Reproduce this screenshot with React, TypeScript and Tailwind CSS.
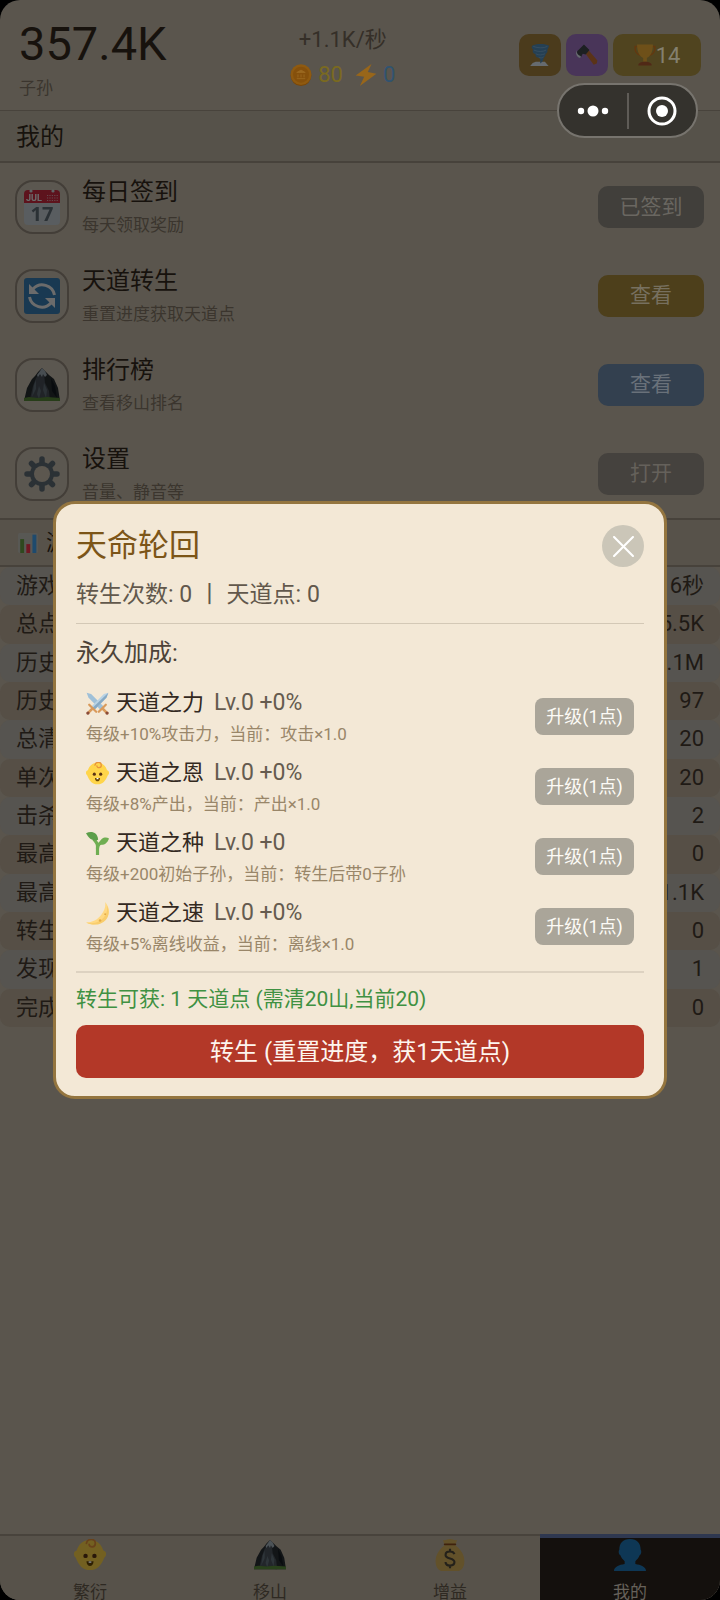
import React from "react";

interface IconProps {
  className?: string;
}

const CalendarIcon: React.FC<IconProps> = ({ className }) => (
  <svg viewBox="0 0 36 36" className={className}>
    <rect x="0" y="2" width="36" height="34" rx="4" fill="#d3dde4" />
    <path d="M0 14V5a4 4 0 0 1 4-4h28a4 4 0 0 1 4 4v9z" fill="#dd2e44" />
    <circle cx="7" cy="2" r="1.6" fill="#e8eef2" />
    <circle cx="29" cy="2" r="1.6" fill="#e8eef2" />
    <text x="2" y="12" fontSize="9" fontWeight="700" fontFamily="Roboto, sans-serif" fill="#fff">
      JUL
    </text>
    <path d="M23 6.500h11M23 9h11M23 11.500h11" stroke="#f4abba" strokeWidth="1.200" strokeDasharray="1.200 1.200" />
    <text x="18" y="32" fontSize="20" fontWeight="700" textAnchor="middle" fontFamily="Open Sans, sans-serif" fill="#66757f">
      17
    </text>
  </svg>
);

const RefreshIcon: React.FC<IconProps> = ({ className }) => (
  <svg viewBox="0 0 36 36" className={className}>
    <rect width="36" height="36" rx="3" fill="#3b88c3" />
    <g fill="none" stroke="#fff" strokeWidth="3">
      <path d="M9 11a12.500 12.500 0 0 1 21.500 6" />
      <path d="M27 25A12.500 12.500 0 0 1 5.500 19" />
    </g>
    <path d="M5 6v10h10z" fill="#fff" />
    <path d="M31 30V20H21z" fill="#fff" />
  </svg>
);

const MountainIcon: React.FC<IconProps> = ({ className }) => (
  <svg viewBox="0 0 36 36" className={className}>
    <path d="M0 34l3-13 5-9 3-3 3-4 4-4 3 3 4 4 5 4 4 9 2 13z" fill="#292f33" />
    <path d="M6 32l3-13 3-8 4-6 2-2 2 4 1 9 4 8 1 10z" fill="#4b545d" />
    <path d="M13 8l3-4 2-3 3 3 2 4-2 2-2-3-1 3-2-3-2 3z" fill="#aab8c2" />
    <path d="M10 18l2-5v9l-4 8zM20 16l3 7-1 8-3-8zM15 19l2 5-2 8-2-5z" fill="#66757f" />
    <path d="M27 11l4 8 2 12-5-7z" fill="#141b21" />
    <path d="M0 34v-3l5-1 9 1 9-1 13 1v3z" fill="#5c913b" />
  </svg>
);

const GearIcon: React.FC<IconProps> = ({ className }) => (
  <svg viewBox="0 0 36 36" className={className}>
    <g stroke="#66757f" strokeWidth="5.500" strokeLinecap="round">
      <path d="M18 3v30M3 18h30M7.500 7.500l21 21M28.500 7.500l-21 21" />
    </g>
    <circle cx="18" cy="18" r="12" fill="#66757f" />
    <circle cx="18" cy="18" r="8" fill="#dccfbc" />
  </svg>
);

const ChartIcon: React.FC<IconProps> = ({ className }) => (
  <svg viewBox="0 0 36 36" className={className}>
    <rect width="36" height="36" rx="3" fill="#b0afa9" />
    <rect x="4" y="11" width="7" height="25" fill="#5c913b" />
    <rect x="15" y="20" width="7" height="16" fill="#dd2e44" />
    <rect x="26" y="3" width="7" height="33" fill="#3b94d9" />
  </svg>
);

const CoinIcon: React.FC<IconProps> = ({ className }) => (
  <svg viewBox="0 0 36 36" className={className}>
    <circle cx="18" cy="19" r="17" fill="#7a4607" />
    <circle cx="18" cy="17.500" r="17" fill="#8f5a10" />
    <circle cx="18" cy="17.500" r="13" fill="#85500c" />
    <path d="M11 14l7-4 7 4H11zM11 24h14M13 17v5M18 17v5M23 17v5" fill="#9a6820" stroke="#9a6820" strokeWidth="1.500" />
  </svg>
);

const BoltIcon: React.FC<IconProps> = ({ className }) => (
  <svg viewBox="0 0 36 36" className={className}>
    <path d="M27 0L1 19l14 2-7 15 27-20-14-3z" fill="#98661a" />
  </svg>
);

const TornadoIcon: React.FC<IconProps> = ({ className }) => (
  <svg viewBox="0 0 36 36" className={className}>
    <path d="M6 31l5-2h15l6 7H2z" fill="#ccd6dd" />
    <path d="M5 3c6-4 22-4 28 0-1 3-2 5-3 7 1 3-1 5-3 7 0 3-2 4-3 6-1 4-2 7-6 9 1-4 1-6-1-9-6-1-7-4-6-6-5-2-6-5-4-8-3-2-3-4-2-6z" fill="#4a7fa8" />
    <path d="M7 4c8 3 17 3 23 0M8 10c7 3 14 3 20 0M11 16c5 3 11 2 15 0M16 22c3 1 6 1 8-1" fill="none" stroke="#6f9dc0" strokeWidth="1.500" />
  </svg>
);

const AxeIcon: React.FC<IconProps> = ({ className }) => (
  <svg viewBox="0 0 36 36" className={className}>
    <path d="M12 11l5-5 18 21-1 5-5 2z" fill="#b5652e" />
    <path d="M2 12L13 1l9 9-6 7-5-1-3 6c-4-1-7-6-6-10z" fill="#3a4045" />
    <path d="M0 10c1 5 3 9 8 10l-1 3C2 22-1 17 0 10z" fill="#ccd6dd" />
  </svg>
);

const TrophyIcon: React.FC<IconProps> = ({ className }) => (
  <svg viewBox="0 0 36 36" className={className}>
    <path d="M9 4H2c-1 8 3 14 10 15M27 4h7c1 8-3 14-10 15" fill="none" stroke="#c6701d" strokeWidth="2.500" />
    <path d="M5 1h26c0 13-5 20-10 22v6h-6v-6C10 21 5 14 5 1z" fill="#dba032" />
    <path d="M7 35c0-4 4-6 11-6s11 2 11 6z" fill="#a0522d" />
  </svg>
);

const BabyIcon: React.FC<IconProps> = ({ className }) => (
  <svg viewBox="0 0 36 36" className={className}>
    <path d="M18 1c8 0 13 5 15 12 4 1 4 6 1 8-3 8-8 14-16 14S5 29 2 21c-3-2-3-7 1-8C5 6 10 1 18 1z" fill="#ffd54a" />
    <path d="M14 5c1-6 10-6 10 0 0 5-7 5-7 1" fill="none" stroke="#e8923a" strokeWidth="2" strokeLinecap="round" />
    <circle cx="13" cy="19" r="2.500" fill="#5b3314" />
    <circle cx="23" cy="19" r="2.500" fill="#5b3314" />
    <path d="M14 25h8c0 7-8 7-8 0z" fill="#664500" />
    <rect x="16.500" y="25" width="3" height="2" fill="#fff" />
  </svg>
);

const SwordsIcon: React.FC<IconProps> = ({ className }) => (
  <svg viewBox="0 0 36 36" className={className}>
    <path d="M1 1l7 2 20 20-5 5L4 9z" fill="#9fc0d8" />
    <path d="M35 1l-7 2L8 23l5 5L32 9z" fill="#b9d3e5" />
    <path d="M35 1L10 25l3 3L32 9z" fill="#86a9c4" />
    <g stroke="#d99a5b" strokeWidth="3.500" strokeLinecap="round">
      <path d="M5 20l11 11M31 20L20 31" />
      <path d="M9 27l-6 6M27 27l6 6" strokeWidth="4" />
    </g>
    <circle cx="3" cy="33" r="2.600" fill="#8a4b38" />
    <circle cx="33" cy="33" r="2.600" fill="#8a4b38" />
  </svg>
);

const SproutIcon: React.FC<IconProps> = ({ className }) => (
  <svg viewBox="0 0 36 36" className={className}>
    <path d="M18 36V22c0-4-2-7-6-11" fill="none" stroke="#6fae52" strokeWidth="5" />
    <path d="M18 26c0-6 3-9 9-11" fill="none" stroke="#6fae52" strokeWidth="5" />
    <path d="M0 2c8-4 18-2 19 10-8 3-14-1-19-10z" fill="#5c9e4a" />
    <path d="M36 10c-5-3-13-2-16 9 7 3 13-1 16-9z" fill="#6fae52" />
  </svg>
);

const MoonIcon: React.FC<IconProps> = ({ className }) => (
  <svg viewBox="0 0 36 36" className={className}>
    <path d="M30 0c7 8 8 19 1 27S10 38 0 32c10 0 18-4 24-12 5-7 7-13 6-20z" fill="#ffd983" />
    <path d="M1 32c10 3 21 0 27-8 4-5 6-11 5-18 4 8 3 16-2 22-8 9-21 9-30 4z" fill="#f9cd6c" />
    <circle cx="30" cy="19" r="1.500" fill="#e5ac48" />
    <circle cx="22" cy="29" r="2" fill="#e5ac48" />
  </svg>
);

const MoneyBagIcon: React.FC<IconProps> = ({ className }) => (
  <svg viewBox="0 0 36 36" className={className}>
    <path d="M12 7L10 1c3 1 5-1 8-1s5 2 8 1l-2 6c8 6 11 13 10 21-1 5-4 8-8 8H10c-4 0-7-3-8-8C1 20 4 13 12 7z" fill="#d9b35e" />
    <path d="M12 6h12" stroke="#8a4b1c" strokeWidth="2" strokeLinecap="round" />
    <path d="M23 17c-1-3-3-3-5-3-3 0-5 1-5 4 0 5 10 3 10 8 0 3-2 4-5 4s-5-1-5-4M18 11v3M18 30v3" fill="none" stroke="#4f4a3a" strokeWidth="2.400" />
  </svg>
);

const PersonIcon: React.FC<IconProps> = ({ className }) => (
  <svg viewBox="0 0 36 36" className={className}>
    <path d="M18 0c8 0 12 5 12 12 1 1 1 5-1 6-1 3-3 5-5 7v3c6 1 12 3 12 8H0c0-5 6-7 12-8v-3c-2-2-4-4-5-7-2-1-2-5-1-6C6 5 10 0 18 0z" fill="#207bbd" />
  </svg>
);

const menu = [
  {
    title: "每日签到",
    text: "每天领取奖励",
    action: "已签到",
    color: "bg-[#413f3b] text-[#6a6761]",
    icon: CalendarIcon,
  },
  {
    title: "天道转生",
    text: "重置进度获取天道点",
    action: "查看",
    color: "bg-[#4d3f1b] text-[#77705f]",
    icon: RefreshIcon,
  },
  {
    title: "排行榜",
    text: "查看移山排名",
    action: "查看",
    color: "bg-[#33404f] text-[#69717a]",
    icon: MountainIcon,
  },
  {
    title: "设置",
    text: "音量、静音等",
    action: "打开",
    color: "bg-[#45423e] text-[#65615b]",
    icon: GearIcon,
  },
];

const stats = [
  ["游戏", "6秒"],
  ["总点", "5.5K"],
  ["历史", "4.1M"],
  ["历史", "97"],
  ["总清", "20"],
  ["单次", "20"],
  ["击杀", "2"],
  ["最高", "0"],
  ["最高", "1.1K"],
  ["转生", "0"],
  ["发现", "1"],
  ["完成", "0"],
];

const upgrades = [
  { name: "天道之力", level: "Lv.0 +0%", text: "每级+10%攻击力，当前：攻击×1.0", icon: SwordsIcon },
  { name: "天道之恩", level: "Lv.0 +0%", text: "每级+8%产出，当前：产出×1.0", icon: BabyIcon },
  { name: "天道之种", level: "Lv.0 +0", text: "每级+200初始子孙，当前：转生后带0子孙", icon: SproutIcon },
  { name: "天道之速", level: "Lv.0 +0%", text: "每级+5%离线收益，当前：离线×1.0", icon: MoonIcon },
];

const tabs = [
  { label: "繁衍", icon: BabyIcon, active: false },
  { label: "移山", icon: MountainIcon, active: false },
  { label: "增益", icon: MoneyBagIcon, active: false },
  { label: "我的", icon: PersonIcon, active: true },
];

const Header = () => (
  <header className="flex h-[110px] shrink-0 items-start justify-between px-[19px]">
    <div className="pt-4">
      <h1 className="text-[47px] leading-[56px] text-[#17120d]">357.4K</h1>
      <p className="text-[17px] leading-[32px] text-[#3b352e]">子孙</p>
    </div>
    <div className="flex flex-col items-center pt-[22px] text-[22px] leading-[35px]">
      <p className="text-[#352f28]">+1.1K/秒</p>
      <div className="flex items-center">
        <CoinIcon className="mr-[6px] h-[22px] w-[22px]" />
        <span className="mr-3 text-[#7a6a20]">80</span>
        <BoltIcon className="mr-[6px] h-[22px] w-[22px]" />
        <span className="text-[#305370]">0</span>
      </div>
    </div>
    <div className="flex gap-[5px] pt-[34px]">
      <button className="flex h-[42px] w-[42px] items-center justify-center rounded-[10px] bg-[#4b3b1c]">
        <TornadoIcon className="h-[22px] w-[22px] brightness-50" />
      </button>
      <button className="flex h-[42px] w-[42px] items-center justify-center rounded-[10px] bg-[#493559]">
        <AxeIcon className="h-[22px] w-[22px] brightness-50" />
      </button>
      <button className="flex h-[42px] w-[88px] items-center justify-center rounded-[10px] bg-[#50441f] text-[22px] text-[#84806f]">
        <TrophyIcon className="h-[22px] w-[22px] brightness-50" />
        14
      </button>
    </div>
  </header>
);

const MenuList = () => (
  <ul className="grid h-[355px] auto-rows-fr">
    {menu.map(({ title, text, action, color, icon: Icon }) => (
      <li key={title} className="flex items-center pl-[15px] pr-4">
        <div className="mr-[13px] flex h-[54px] w-[54px] items-center justify-center rounded-[18px] border-2 border-[#433e38] bg-[#5b5750]">
          <Icon className="h-9 w-9 brightness-[0.42]" />
        </div>
        <div className="flex-1">
          <h3 className="text-[24px] leading-9 text-[#17120d]">{title}</h3>
          <p className="text-[17px] leading-[30px] text-[#3b352e]">{text}</p>
        </div>
        <button className={`h-[42px] w-[106px] rounded-[10px] text-[21px] ${color}`}>{action}</button>
      </li>
    ))}
  </ul>
);

const StatsTable = () => (
  <table className="h-[460px] w-full text-[22px] leading-8 text-[#1f1a15]">
    <tbody>
      {stats.map(([label, value], i) => (
        <tr key={i} className="odd:bg-[#565450] even:bg-[#564f46]">
          <th scope="row" className="rounded-l-[10px] py-0 pl-4 text-left font-normal">
            {label}
          </th>
          <td className="rounded-r-[10px] py-0 pr-4 text-right">{value}</td>
        </tr>
      ))}
    </tbody>
  </table>
);

const TabBar = () => (
  <nav className="flex h-[66px] shrink-0 overflow-hidden bg-[#57524a]">
    {tabs.map(({ label, icon: Icon, active }) => (
      <a
        key={label}
        href="#"
        className={`flex flex-1 flex-col items-center text-[17px] leading-5 ${
          active
            ? "border-t-4 border-[#2f3850] bg-[#14100d] pt-[1px] text-[#66615a]"
            : "border-t-2 border-[#48433c] pt-[3px] text-[#2e2922]"
        }`}
      >
        <Icon className="mb-[11px] h-8 w-8 shrink-0 brightness-[0.45]" />
        <span>{label}</span>
      </a>
    ))}
  </nav>
);

const RebirthDialog = () => (
  <div
    role="dialog"
    aria-labelledby="rebirth-title"
    className="w-full rounded-[22px] border-3 border-[#94753f] bg-[#f3e8d6] px-5 pb-[18px] pt-[21px]"
  >
    <div className="flex h-[42px] items-center justify-between">
      <h2 id="rebirth-title" className="text-[31px] leading-10 text-[#7c5518]">
        天命轮回
      </h2>
      <button aria-label="关闭" className="flex h-[42px] w-[42px] items-center justify-center rounded-full bg-[#cbc6b8]">
        <svg viewBox="0 0 20 20" className="h-[21px] w-[21px]">
          <path d="M1 1l18 18M19 1L1 19" stroke="#fff" strokeWidth="2" strokeLinecap="round" />
        </svg>
      </button>
    </div>
    <p className="whitespace-pre border-b border-[#d3c8b6] text-[23px] leading-[56px] text-[#62584c]">
      转生次数: 0 丨 天道点: 0
    </p>
    <h3 className="text-[24px] leading-[58px] text-[#4d4338]">永久加成:</h3>
    <ul className="px-[10px] pb-[9px]">
      {upgrades.map(({ name, level, text, icon: Icon }) => (
        <li key={name} className="flex h-[70px] items-center justify-between">
          <div>
            <h4 className="flex items-center text-[22px] leading-[34px] text-[#33291f]">
              <Icon className="mr-[7px] h-[23px] w-[23px]" />
              {name}
              <span className="ml-[10px] text-[23px] text-[#655b4f]">{level}</span>
            </h4>
            <p className="text-[17px] leading-7 text-[#998669]">{text}</p>
          </div>
          <button className="mb-0.5 h-[37px] w-[99px] rounded-[8px] bg-[#aaa599] text-[18px] text-[#fdfbf6]">
            升级(1点)
          </button>
        </li>
      ))}
    </ul>
    <p className="border-t-2 border-[#ddd2c1] text-[21px] leading-[52px] text-[#3f9142]">
      转生可获: 1 天道点 (需清20山,当前20)
    </p>
    <button className="h-[53px] w-full rounded-[10px] bg-[#b33828] text-[24px] text-[#fdf5ee]">
      转生 (重置进度，获1天道点)
    </button>
  </div>
);

const App: React.FC = () => {
  return (
    <div className="relative h-screen bg-black font-['Roboto','Noto_Sans_CJK_SC',sans-serif]">
      <div className="flex h-full flex-col overflow-hidden rounded-[20px] bg-[#5a554d]">
        <Header />
        <h2 className="h-[53px] shrink-0 border-b-2 border-t border-b-[#47423b] border-t-[#48433c] bg-[#56524a] px-4 text-[24px] leading-[52px] text-[#17120d]">
          我的
        </h2>
        <main className="min-h-0 flex-1 overflow-hidden">
          <MenuList />
          <h2 className="flex h-[49px] items-center gap-2 border-y-2 border-[#47423b] bg-[#57524a] px-[18px] text-[22px] text-[#17120d]">
            <ChartIcon className="h-5 w-5 brightness-[0.5]" />
            游
          </h2>
          <StatsTable />
        </main>
        <TabBar />
      </div>

      {/* Dialog over the page */}
      <div className="absolute inset-0 flex items-center px-[53px]">
        <RebirthDialog />
      </div>

      {/* Mini program capsule */}
      <div className="absolute right-[22px] top-[83px] flex h-[55px] w-[141px] items-center rounded-full border-2 border-[#77746e] bg-[#34322d]">
        <button aria-label="更多" className="flex h-full flex-1 items-center justify-center">
          <svg viewBox="0 0 32 12" className="h-3 w-8" fill="#fff">
            <circle cx="4" cy="6" r="3.200" />
            <circle cx="16" cy="6" r="5.500" />
            <circle cx="28" cy="6" r="3.200" />
          </svg>
        </button>
        <span className="h-9 w-0.5 bg-[#5f5c57]" />
        <button aria-label="退出" className="flex h-full flex-1 items-center justify-center">
          <svg viewBox="0 0 30 30" className="h-[30px] w-[30px]">
            <circle cx="15" cy="15" r="13" fill="none" stroke="#fff" strokeWidth="3" />
            <circle cx="15" cy="15" r="6" fill="#fff" />
          </svg>
        </button>
      </div>
    </div>
  );
};

export default App;
